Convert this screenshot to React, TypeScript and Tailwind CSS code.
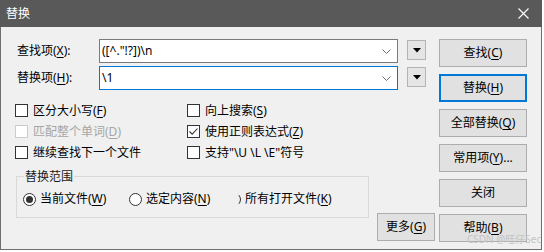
import React from "react";

const U = ({ c }: { c: string }) => <span className="underline underline-offset-[2px]">{c}</span>;

function Check({ checked, disabled, children }: { checked?: boolean; disabled?: boolean; children: React.ReactNode }) {
  return (
    <div className="flex items-center h-[21px]">
      <span
        className={
          disabled
            ? "w-[13px] h-[13px] border border-[#cccccc] bg-white flex items-center justify-center"
            : "w-[13px] h-[13px] border border-[#333333] bg-white flex items-center justify-center"
        }
      >
        {checked && (
          <svg width="11" height="11" viewBox="0 0 11 11">
            <path d="M1.5 5.5 L4.2 8.2 L9.5 2.5" stroke="#333" fill="none" strokeWidth="1.1" />
          </svg>
        )}
      </span>
      <span className={disabled ? "ml-[5px] text-[#a6a6a6] whitespace-nowrap" : "ml-[5px] text-black whitespace-nowrap"}>{children}</span>
    </div>
  );
}

function Radio({ checked, half, children, w }: { checked?: boolean; half?: boolean; children: React.ReactNode; w: string }) {
  return (
    <div className={`flex items-center ${w}`}>
      <span
        className={
          half
            ? "w-[13px] h-[13px] rounded-full border border-[#333333] border-l-transparent border-t-transparent border-b-transparent -ml-[0px]"
            : "w-[13px] h-[13px] rounded-full border border-[#333333] bg-white flex items-center justify-center"
        }
      >
        {checked && <span className="w-[7px] h-[7px] rounded-full bg-[#333333]" />}
      </span>
      <span className="ml-[4px] whitespace-nowrap">{children}</span>
    </div>
  );
}

function Btn({ children, def, w = "w-[88px]" }: { children: React.ReactNode; def?: boolean; w?: string }) {
  return (
    <div
      className={
        def
          ? `${w} h-[28px] bg-[#e1e1e1] border-2 border-[#0078d7] flex items-center justify-center`
          : `${w} h-[28px] bg-[#e1e1e1] border border-[#adadad] flex items-center justify-center`
      }
    >
      {children}
    </div>
  );
}

function Combo({ text, active }: { text: string; active?: boolean }) {
  return (
    <div
      className={
        active
          ? "w-[299px] h-[24px] bg-white border border-[#0078d7] flex items-center justify-between pl-[2px] pr-[6px]"
          : "w-[299px] h-[24px] bg-white border border-[#7a7a7a] flex items-center justify-between pl-[2px] pr-[6px]"
      }
    >
      <span className="font-['Noto_Sans','Noto_Sans_CJK_SC',sans-serif] text-[12px] text-black whitespace-pre">{text}</span>
      <svg width="9" height="5" viewBox="0 0 9 5">
        <path d="M0.5 0.5 L4.5 4.5 L8.5 0.5" stroke="#707070" fill="none" strokeWidth="1" />
      </svg>
    </div>
  );
}

function DropBtn() {
  return (
    <div className="ml-[9px] mt-[1px] w-[19px] h-[20px] bg-[#e5e5e5] border border-[#b4b4b4] flex items-center justify-center">
      <svg width="8" height="5" viewBox="0 0 8 5">
        <path d="M0 0 L8 0 L4 4.5 Z" fill="#000" />
      </svg>
    </div>
  );
}

export default function App() {
  return (
    <div className="w-[544px] h-[252px] bg-white relative overflow-hidden font-['Noto_Sans','Noto_Sans_CJK_SC',sans-serif] text-[12px] leading-[16px] text-black">
      <div className="w-[542px] h-[250px] flex flex-col border-x border-b border-[#6e6e6e] bg-[#f0f0f0]">
        <div className="h-[27px] -mx-[1px] bg-[#595959] flex items-center justify-between pl-[6px] pr-[13px] text-white">
          <span className="text-[12px]">替换</span>
          <svg width="11" height="11" viewBox="0 0 11 11">
            <path d="M0.5 0.5 L10.5 10.5 M10.5 0.5 L0.5 10.5" stroke="#fff" strokeWidth="1.1" />
          </svg>
        </div>
        <div className="flex pt-[12px] pl-[14px]">
          <div className="w-[420px] flex flex-col">
            <div className="flex items-start">
              <div className="w-[84px] pl-[2px] h-[24px] flex items-center whitespace-nowrap">
                查找项(<U c="X" />):
              </div>
              <Combo text={'([^."!?])\\n'} />
              <DropBtn />
            </div>
            <div className="flex items-start mt-[3px]">
              <div className="w-[84px] pl-[2px] h-[24px] flex items-center whitespace-nowrap">
                替换项(<U c="H" />):
              </div>
              <Combo text={"\\1"} active />
              <DropBtn />
            </div>
            <div className="mt-[10px] grid grid-cols-[172px_1fr]">
              <Check>
                区分大小写(<U c="F" />)
              </Check>
              <Check>
                向上搜索(<U c="S" />)
              </Check>
              <Check disabled>
                匹配整个单词(<U c="D" />)
              </Check>
              <Check checked>
                使用正则表达式(<U c="Z" />)
              </Check>
              <Check>继续查找下一个文件</Check>
              <Check>{'支持"\\U \\L \\E"符号'}</Check>
            </div>
            <div className="flex items-start mt-[7px]">
              <div className="relative ml-[1px] mt-[6px] w-[353px] h-[42px] border border-[#d9d9d9]">
                <span className="absolute -top-[8px] left-[7px] px-[1px] bg-[#f0f0f0] text-[#1a1a1a]">替换范围</span>
                <div className="flex items-center h-full pt-[4px] pl-[6px]">
                  <Radio checked w="w-[106px]">
                    当前文件(<U c="W" />)
                  </Radio>
                  <Radio w="w-[99px]">
                    选定内容(<U c="N" />)
                  </Radio>
                  <Radio half w="w-[130px]">
                    所有打开文件(<U c="K" />)
                  </Radio>
                </div>
              </div>
              <div className="ml-[8px] mt-[43px]">
                <Btn w="w-[58px]">
                  更多(<U c="G" />)
                </Btn>
              </div>
            </div>
          </div>
          <div className="ml-[4px] flex flex-col gap-[7px]">
            <Btn>
              查找(<U c="C" />)
            </Btn>
            <Btn def>
              替换(<U c="H" />)
            </Btn>
            <Btn>
              全部替换(<U c="Q" />)
            </Btn>
            <Btn>
              常用项(<U c="Y" />)...
            </Btn>
            <Btn>关闭</Btn>
            <Btn>
              帮助(<U c="B" />)
            </Btn>
          </div>
        </div>
      </div>
      <span className="absolute left-[467px] top-[233px] text-[10px] leading-[12px] text-[#c4c4c4] whitespace-nowrap">CSDN @旺仔Sec</span>
    </div>
  );
}
